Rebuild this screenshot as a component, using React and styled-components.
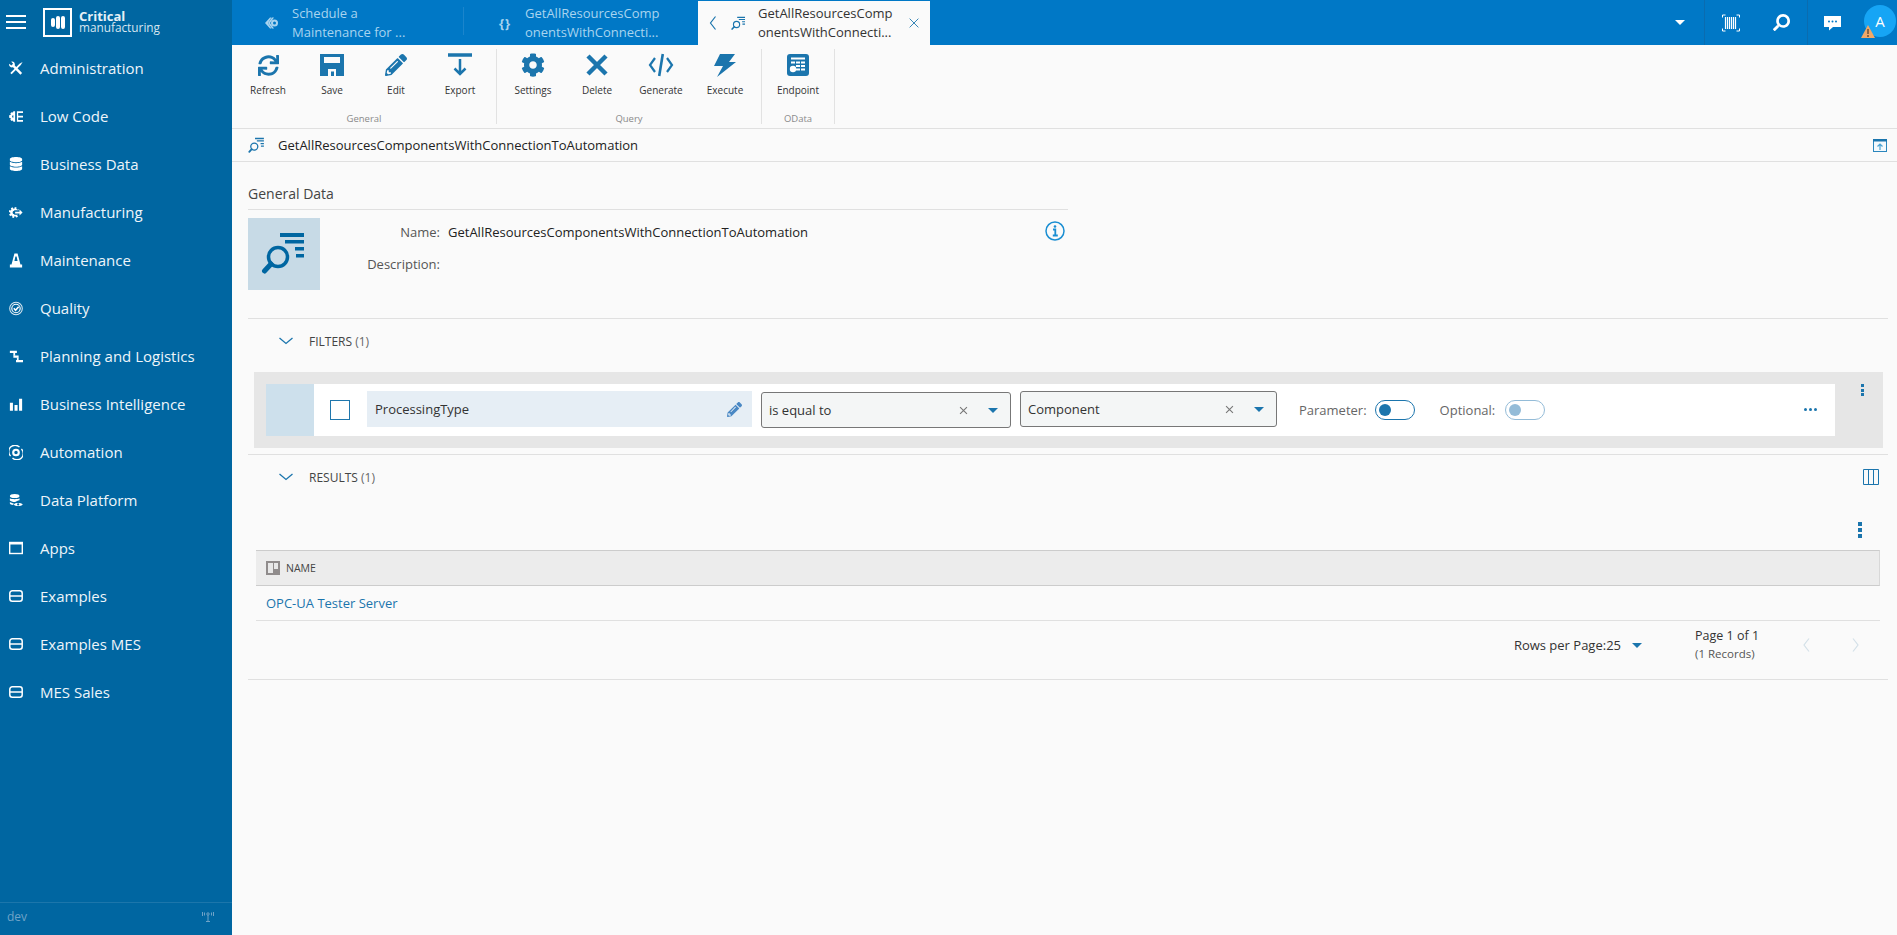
import React from 'react';
import styled, { createGlobalStyle } from 'styled-components';
import { FaSync, FaPencilAlt, FaCog, FaDatabase, FaSearch } from 'react-icons/fa';

const GlobalStyle = createGlobalStyle`
  html, body { margin: 0; padding: 0; height: 100%; overflow: hidden; background: #fafafa; }
  body { font-family: "Open Sans", "Liberation Sans", sans-serif; color: #333; }
  * { box-sizing: border-box; }
`;

const Shell = styled.div`
  display: flex;
  height: 935px;
`;

/* sidebar */
const Sidebar = styled.aside`
  width: 232px;
  flex: none;
  background: #0066a1;
  color: #fff;
  display: flex;
  flex-direction: column;
`;
const Brand = styled.div`
  height: 44px;
  display: flex;
  align-items: center;
  padding-left: 6px;
`;
const Burger = styled.div`
  width: 20px;
  height: 14px;
  border-top: 2px solid #fff;
  border-bottom: 2px solid #fff;
  position: relative;
  &::after {
    content: '';
    position: absolute;
    left: 0;
    right: 0;
    top: 4px;
    height: 2px;
    background: #fff;
  }
`;
const LogoBox = styled.div`
  width: 29px;
  height: 29px;
  margin-left: 17px;
  border: 2px solid #fff;
  display: flex;
  align-items: center;
  justify-content: center;
  gap: 1px;
`;
const LogoBar = styled.span`
  width: 4px;
  height: ${p => p.$h}px;
  background: #fff;
  border-radius: 2px;
`;
const LogoText = styled.div`
  margin-left: 7px;
  display: flex;
  flex-direction: column;
  line-height: 11px;
`;
const LogoBold = styled.span`
  font-weight: 700;
  font-size: 13px;
  color: #e6f0f6;
`;
const LogoLight = styled.span`
  font-weight: 400;
  font-size: 11.8px;
  color: #d6e5f0;
`;
const Nav = styled.nav`
  flex: 1;
`;
const NavItem = styled.div`
  height: 48px;
  display: flex;
  align-items: center;
  padding-left: 9px;
  font-size: 15px;
  color: #eef5fa;
`;
const NavIcon = styled.span`
  width: 14px;
  height: 14px;
  margin-right: 17px;
  display: flex;
  align-items: center;
  justify-content: center;
  flex: none;
`;
const SideFoot = styled.div`
  height: 33px;
  border-top: 1px solid #1c76ab;
  display: flex;
  align-items: center;
  justify-content: space-between;
  padding: 0 17px 6px 7px;
  font-size: 12px;
  color: #6fa3c7;
`;

/* main column */
const Main = styled.main`
  flex: 1;
  min-width: 0;
  display: flex;
  flex-direction: column;
`;
const TopBar = styled.header`
  height: 45px;
  background: #0078c6;
  display: flex;
  flex: none;
`;
const Tab = styled.div`
  width: ${p => p.$w}px;
  margin-top: ${p => (p.$active ? 1 : 0)}px;
  display: flex;
  align-items: center;
  background: ${p => (p.$active ? '#fafafa' : 'transparent')};
  color: ${p => (p.$active ? '#333' : '#a8d4ef')};
  position: relative;
  ${p => p.$sep && `
    &::after {
      content: '';
      position: absolute;
      right: 0;
      top: 7px;
      bottom: 10px;
      width: 1px;
      background: #1b85cc;
    }
  `}
`;
const TabIcon = styled.span`
  width: 16px;
  margin-left: ${p => p.$left}px;
  margin-right: ${p => p.$right}px;
  display: flex;
  justify-content: center;
  flex: none;
`;
const TabBrace = styled.b`
  font-size: 13px;
  letter-spacing: 1px;
`;
const TabText = styled.div`
  width: 137px;
  font-size: 13px;
  line-height: 19px;
  white-space: nowrap;
`;
const TopSpacer = styled.div`
  flex: 1;
  display: flex;
  justify-content: flex-end;
  align-items: center;
`;
const Caret = styled.span`
  width: 0;
  height: 0;
  border-left: ${p => p.$size}px solid transparent;
  border-right: ${p => p.$size}px solid transparent;
  border-top: ${p => p.$size}px solid ${p => p.$color};
  flex: none;
`;
const TabsCaret = styled(Caret)`
  margin-right: 19px;
`;
const MirrorSearch = styled(FaSearch)`
  transform: scaleX(-1);
`;
const TopCell = styled.div`
  width: ${p => p.$w}px;
  height: 45px;
  display: flex;
  align-items: center;
  justify-content: space-around;
  border-left: 1px solid #0a6cb0;
  flex: none;
`;
const Avatar = styled.div`
  width: 32px;
  height: 32px;
  border-radius: 50%;
  margin: 0 1px 3px 7px;
  background: #16a5f5;
  color: #fff;
  display: flex;
  align-items: center;
  justify-content: center;
  font-size: 15px;
  position: relative;
  flex: none;
`;
const AvatarWarn = styled.svg`
  position: absolute;
  left: -3px;
  bottom: -2px;
`;

/* ribbon */
const Ribbon = styled.div`
  height: 84px;
  flex: none;
  display: flex;
  border-bottom: 1px solid #e0e0e0;
  padding-top: 4px;
`;
const RibbonGroup = styled.div`
  padding: 0 4px;
  height: 75px;
  border-right: 1px solid #e2e2e2;
  display: flex;
  flex-direction: column;
  align-items: center;
`;
const RibbonButtons = styled.div`
  display: flex;
  flex: 1;
`;
const ToolButton = styled.div`
  width: 64px;
  display: flex;
  flex-direction: column;
  align-items: center;
  font-size: 10px;
  color: #333;
`;
const ToolIcon = styled.div`
  height: 24px;
  margin-top: 4px;
  margin-bottom: 6px;
  display: flex;
  align-items: center;
  justify-content: center;
  color: #1b75ad;
`;
const GroupLabel = styled.div`
  font-size: 9.5px;
  color: #8a8a8a;
  line-height: 13px;
  margin-bottom: -1px;
`;

const TitleBar = styled.div`
  height: 33px;
  flex: none;
  display: flex;
  align-items: center;
  padding: 0 10px 0 16px;
  border-bottom: 1px solid #e0e0e0;
  font-size: 13px;
  color: #222;
`;
const TitleText = styled.span`
  margin-left: 13px;
  flex: 1;
`;

/* page content */
const Content = styled.div`
  flex: 1;
  padding: 0 9px 0 16px;
`;
const GeneralBlock = styled.section`
  width: 820px;
  padding-top: 17px;
`;
const BlockHead = styled.div`
  height: 31px;
  font-size: 14px;
  color: #444;
  line-height: 30px;
  border-bottom: 1px solid #e0e0e0;
`;
const Details = styled.div`
  display: flex;
  height: 72px;
  margin-top: 8px;
  padding-right: 3px;
`;
const HeroIcon = styled.div`
  width: 72px;
  height: 72px;
  background: #c7dae6;
  display: flex;
  align-items: center;
  justify-content: center;
  flex: none;
`;
const FormGrid = styled.div`
  display: grid;
  grid-template-columns: 120px 1fr;
  grid-auto-rows: 32px;
  column-gap: 8px;
  flex: 1;
  align-items: center;
  font-size: 13px;
  margin-top: -2px;
`;
const FormLabel = styled.div`
  text-align: right;
  color: #555;
`;
const FormValue = styled.div`
  color: #222;
`;
const InfoSlot = styled.div`
  padding-top: 3px;
`;
const Divider = styled.div`
  height: 1px;
  margin-top: ${p => p.$top || 0}px;
  background: #e0e0e0;
`;
const SectionHead = styled.div`
  height: ${p => p.$h}px;
  padding-bottom: ${p => p.$pb || 0}px;
  display: flex;
  align-items: center;
  padding-left: 30px;
  padding-right: 9px;
  font-size: 12px;
  color: #444;
`;
const SectionLabel = styled.span`
  margin-left: 15px;
  flex: 1;
`;
const SectionCount = styled.span`
  color: #666;
`;
const FilterBox = styled.div`
  margin: 6px 5px 6px 6px;
  height: 76px;
  background: #e6e6e6;
  display: flex;
  padding: 12px 0 12px 12px;
`;
const FilterRow = styled.div`
  flex: 1;
  background: #fff;
  display: flex;
  align-items: center;
`;
const FilterStrip = styled.div`
  width: 48px;
  align-self: stretch;
  background: #cde0ec;
  flex: none;
`;
const CheckBox = styled.div`
  width: 20px;
  height: 20px;
  margin-left: 16px;
  border: 1px solid #1f77ad;
  flex: none;
`;
const FieldBox = styled.div`
  width: 385px;
  height: 36px;
  margin: 0 0 2px 17px;
  padding: 0 10px 0 8px;
  background: #e6eef5;
  display: flex;
  align-items: center;
  justify-content: space-between;
  font-size: 13px;
  flex: none;
`;
const SelectBox = styled.div`
  width: ${p => p.$w}px;
  height: 36px;
  margin: 0 0 ${p => p.$lift || 0}px 9px;
  padding: 0 12px 0 7px;
  border: 1px solid #777;
  border-radius: 3px;
  background: #f4f6f6;
  display: flex;
  align-items: center;
  font-size: 13px;
  flex: none;
`;
const SelectText = styled.span`
  flex: 1;
`;
const SelectClear = styled.span`
  margin-right: 19px;
  display: flex;
`;
const ToggleLabel = styled.span`
  font-size: 13px;
  color: #666;
  margin-left: ${p => p.$left}px;
`;
const Toggle = styled.div`
  width: 40px;
  height: 20px;
  margin-left: ${p => (p.$off ? 10 : 8)}px;
  border: 1px solid ${p => (p.$off ? '#94bcd8' : '#1b75ad')};
  border-radius: 10px;
  display: flex;
  align-items: center;
  padding-left: 3px;
  flex: none;
  &::before {
    content: '';
    width: 12px;
    height: 12px;
    border-radius: 50%;
    background: ${p => (p.$off ? '#94bcd8' : '#1b75ad')};
  }
`;
const RowMore = styled.div`
  margin-left: auto;
  margin-right: 18px;
  margin-bottom: 2px;
  display: flex;
  gap: 2px;
`;
const Dot = styled.span`
  width: ${p => p.$s}px;
  height: ${p => p.$s}px;
  background: ${p => p.$c};
  border-radius: ${p => (p.$square ? 0 : '50%')};
`;
const BoxSide = styled.div`
  width: 48px;
  display: flex;
  justify-content: center;
  padding-left: 7px;
  flex: none;
`;
const VDots = styled.div`
  display: flex;
  flex-direction: column;
  gap: ${p => p.$gap}px;
  align-self: flex-start;
`;
const TableTools = styled.div`
  height: 51px;
  display: flex;
  justify-content: flex-end;
  padding: 23px 26px 0 0;
`;
const DataTable = styled.div`
  margin: 0 8px;
`;
const TableHead = styled.div`
  height: 36px;
  background: #ececec;
  border-top: 1px solid #ccc;
  border-bottom: 1px solid #ccc;
  border-right: 1px solid #d8d8d8;
  display: flex;
  align-items: center;
  padding-left: 10px;
  font-size: 10.5px;
  color: #444;
`;
const ColIcon = styled.span`
  width: 14px;
  height: 14px;
  margin-right: 6px;
  background: #908c8c;
  display: flex;
  gap: 1px;
  padding: 2px;
`;
const ColIconPane = styled.span`
  width: 5px;
  height: ${p => p.$h}px;
  background: #e8e8e8;
`;
const TableRow = styled.div`
  height: 35px;
  display: flex;
  align-items: center;
  padding-left: 10px;
  border-bottom: 1px solid #e0e0e0;
  font-size: 13px;
  color: #1b75ad;
`;
const Pager = styled.div`
  height: 58px;
  display: flex;
  align-items: center;
  justify-content: flex-end;
  padding: 0 9px 10px 0;
  font-size: 13px;
  color: #333;
`;
const RowsPerPage = styled.div`
  display: flex;
  align-items: center;
  gap: 11px;
  margin-right: 53px;
`;
const PageInfo = styled.div`
  width: 88px;
  line-height: 18px;
  font-size: 12.5px;
`;
const PageSub = styled.div`
  font-size: 11.5px;
  color: #555;
`;
const PageBtn = styled.div`
  width: 48px;
  display: flex;
  justify-content: center;
`;

/* inline drawings */
const Line = ({ d, size = 16, color = 'currentColor', w = 1.5 }) => (
  <svg width={size} height={size} viewBox="0 0 16 16" fill="none" stroke={color} strokeWidth={w}>
    <path d={d} />
  </svg>
);

const Solid = ({ children }) => (
  <svg width="15" height="15" viewBox="0 0 16 16" fill="#fff">
    {children}
  </svg>
);

const QueryIcon = ({ size, color }) => (
  <svg width={size} height={size} viewBox="14 9 46 46" fill="none">
    <circle cx="31" cy="35" r="9.5" stroke={color} strokeWidth="3.5" />
    <path d="M24 42 17.5 49" stroke={color} strokeWidth="5" strokeLinecap="round" />
    <path d="M33 11h24v4H33zM38 18h19v3.5H38zM48 25h9v3.5h-9zM49 32h8v3.5h-8z" fill={color} />
  </svg>
);

const navIcons = {
  admin: (
    <Solid>
      <path d="M1.500 13 12 2.500 15.500 .5 13.500 4 3 14.500Z" />
      <path d="M5.500 3.500 15 13l-2 2-9.500-9.500Z" />
      <path d="M.3 2.600 2.600 4.700 4.700 2.600 2.600.3C4.800-.5 7 1 6.700 4.200L4.200 6.700C1.200 7-.5 4.800.3 2.600Z" />
    </Solid>
  ),
  lowcode: (
    <svg width="15" height="15" viewBox="0 0 16 16" fill="#fff">
      <path fillRule="evenodd" d="M7 2v12H5l-.5-1.500-1.500.5L1.500 11.500l.7-1.500-2-.5v-3l2-.5-.7-1.500L3 3l1.500.5L5 2ZM5 6.500a1.500 1.500 0 0 0 0 3Z" />
      <path d="M9 2h1.500v12H9zM10.500 2H16v2h-5.500zM10.500 7H16v2h-5.500zM10.500 12H16v2h-5.500z" />
    </svg>
  ),
  data: <FaDatabase size={14} color="#fff" />,
  manufacturing: (
    <svg width="15" height="15" viewBox="0 0 16 16" fill="none" stroke="#fff">
      <circle cx="6" cy="8" r="5" strokeWidth="2.400" strokeDasharray="2 1.900" />
      <circle cx="6" cy="8" r="3.300" strokeWidth="2.800" />
      <path d="M6 5.500h5V3l5 5-5 5v-2.500H6Z" fill="#0066a1" stroke="none" />
      <path d="M7 7h5V4.500L15.500 8 12 11.500V9H7Z" fill="#fff" stroke="none" />
    </svg>
  ),
  maintenance: (
    <Solid>
      <path fillRule="evenodd" d="M6.200 0h3.600l3.300 12.500H15V16H1v-3.500h1.900ZM7.300 3.500 6.200 8.500h3.600L8.700 3.500Z" />
    </Solid>
  ),
  quality: (
    <svg width="15" height="15" viewBox="0 0 16 16" fill="none" stroke="#fff">
      <circle cx="8" cy="8" r="7.200" strokeWidth="1.200" strokeOpacity=".85" />
      <circle cx="8" cy="8" r="4.800" strokeWidth="1.300" />
      <path d="M5.500 7.800 7.500 10 11 6" strokeWidth="1.800" />
    </svg>
  ),
  planning: (
    <Solid>
      <path d="M1 1.500h8v2.500H1zM5 6.800h6v2.500H5zM8 12h8v2.500H8z" />
      <path d="M5 4h2v3H5zM9 9h2v3H9z" />
    </Solid>
  ),
  bi: (
    <Solid>
      <path d="M1 6h3.500v9H1zM6.300 8.500h3.500V15H6.300zM11.500 1.500H15V15h-3.500z" />
    </Solid>
  ),
  automation: (
    <svg width="15" height="15" viewBox="0 0 16 16" fill="none" stroke="#fff">
      <path d="M1.800 12A7.200 7.200 0 0 1 12 1.800M14.200 4A7.200 7.200 0 0 1 4 14.200" strokeWidth="1.500" />
      <circle cx="8" cy="8" r="3.200" strokeWidth="2.400" />
    </svg>
  ),
  platform: (
    <Solid>
      <ellipse cx="6.500" cy="2.800" rx="5.500" ry="2.300" />
      <path d="M1 5.500c1.500 1.400 9.500 1.400 11 0v2.200c-2 .4-3.500 1-5 2.100C4 9.800 2 9 1 8ZM1 9.800c1 .8 2.600 1.300 4.500 1.500L4.800 13C2.800 12.900 1 12.300 1 11.500Z" />
      <path d="M5.500 12.500C7 10.300 13.500 10.300 15.800 12.500 13.500 15 7 15 5.500 12.500Z" />
      <circle cx="10.500" cy="12.500" r="1.300" fill="#0066a1" />
    </Solid>
  ),
  apps: (
    <svg width="14" height="14" viewBox="0 0 14 14" fill="none" stroke="#fff">
      <rect x=".7" y="1.500" width="12.600" height="11" strokeWidth="1.400" />
      <path d="M0 2.500h14" strokeWidth="2" />
    </svg>
  ),
  entity: (
    <svg width="14" height="14" viewBox="0 0 14 14" fill="none" stroke="#fff" strokeWidth="1.500">
      <rect x=".8" y="1.800" width="12.400" height="10.400" rx="2.500" />
      <path d="M1 7h12" />
    </svg>
  ),
};

const navItems = [
  ['admin', 'Administration'],
  ['lowcode', 'Low Code'],
  ['data', 'Business Data'],
  ['manufacturing', 'Manufacturing'],
  ['maintenance', 'Maintenance'],
  ['quality', 'Quality'],
  ['planning', 'Planning and Logistics'],
  ['bi', 'Business Intelligence'],
  ['automation', 'Automation'],
  ['platform', 'Data Platform'],
  ['apps', 'Apps'],
  ['entity', 'Examples'],
  ['entity', 'Examples MES'],
  ['entity', 'MES Sales'],
];

const SaveIcon = () => (
  <svg width="24" height="24" viewBox="0 0 24 24" fill="#1b75ad">
    <path fillRule="evenodd" d="M0 1h24v22H0ZM4 4v6h16V4ZM8 16v7h8v-7ZM11 18.500h3V23h-3Z" />
  </svg>
);
const ExportIcon = () => (
  <svg width="24" height="24" viewBox="0 0 24 24" fill="none" stroke="#1b75ad">
    <path d="M0 2h24" strokeWidth="3.500" />
    <path d="M12 6v15M6.500 15.500 12 21l5.500-5.500" strokeWidth="2.500" />
  </svg>
);
const DeleteIcon = () => (
  <svg width="24" height="24" viewBox="0 0 24 24" fill="none" stroke="#1b75ad" strokeWidth="4.500">
    <path d="M3 3 21 21M21 3 3 21" />
  </svg>
);
const GenerateIcon = () => (
  <svg width="26" height="24" viewBox="0 0 26 24" fill="none" stroke="#1b75ad" strokeWidth="2.200">
    <path d="M7 5 2 12l5 7M19 5l5 7-5 7" />
    <path d="M14.800 1 11.200 23" strokeWidth="2.600" />
  </svg>
);
const ExecuteIcon = () => (
  <svg width="24" height="24" viewBox="0 0 24 24" fill="#1b75ad">
    <path d="M7 1H22L16 9H23L4 24 10 13H1Z" />
  </svg>
);
const EndpointIcon = () => (
  <svg width="22" height="22" viewBox="0 0 22 22">
    <rect width="22" height="22" rx="3" fill="#1b75ad" />
    <path d="M4 3.500h14v2H4zM4 7.500h4v2H4zM9 7.500h4v2H9zM14 7.500h4v2h-4zM9 11h4v2H9zM14 11h4v2h-4zM9 14.500h4v2H9zM14 14.500h4v2h-4z" fill="#fff" />
    <circle cx="6" cy="15" r="3.200" fill="#fff" />
  </svg>
);

const ribbon = [
  {
    label: 'General',
    tools: [
      ['Refresh', <FaSync size={21} key="i" />],
      ['Save', <SaveIcon key="i" />],
      ['Edit', <FaPencilAlt size={22} key="i" />],
      ['Export', <ExportIcon key="i" />],
    ],
  },
  {
    label: 'Query',
    tools: [
      ['Settings', <FaCog size={24} key="i" />],
      ['Delete', <DeleteIcon key="i" />],
      ['Generate', <GenerateIcon key="i" />],
      ['Execute', <ExecuteIcon key="i" />],
    ],
  },
  { label: 'OData', tools: [['Endpoint', <EndpointIcon key="i" />]] },
];

const ScanIcon = () => (
  <svg width="18" height="18" viewBox="0 0 18 18" fill="none" stroke="#fff">
    <path d="M.5 3.500V1h3M14.500 1h3v2.500M.5 14.500V17h3M14.500 17h3v-2.500" />
    <path d="M3.500 3v12M5.500 3v12M7.500 3v12M9.500 3v12M11.500 3v12M13.500 3v12" strokeWidth="1.200" />
  </svg>
);
const ChatIcon = () => (
  <svg width="18" height="18" viewBox="0 0 18 18" fill="#fff">
    <path d="M0 2h17v11H9l-4 3.500V13H0Z" />
    <circle cx="5" cy="7.500" r="1" fill="#0078c6" />
    <circle cx="8.500" cy="7.500" r="1" fill="#0078c6" />
    <circle cx="12" cy="7.500" r="1" fill="#0078c6" />
  </svg>
);
const PanelIcon = () => (
  <svg width="14" height="13" viewBox="0 0 14 13">
    <rect x=".5" y=".5" width="13" height="12" fill="#f4f9fc" stroke="#2a86bd" />
    <rect width="14" height="2.500" fill="#1b75ad" />
    <path d="M7 11V5M4.500 7.500 7 5l2.500 2.500" fill="none" stroke="#4aa3d3" strokeWidth="1.200" />
  </svg>
);
const InfoIcon = () => (
  <svg width="20" height="20" viewBox="0 0 20 20" fill="none" stroke="#1a8ed2">
    <circle cx="10" cy="10" r="9" strokeWidth="1.500" />
    <path d="M8 8.500h2.300V14M7.800 14.500h5" strokeWidth="1.800" />
    <circle cx="10" cy="5.500" r="1.300" fill="#1a8ed2" stroke="none" />
  </svg>
);
const ColumnsIcon = () => (
  <svg width="16" height="16" viewBox="0 0 16 16" fill="none" stroke="#1b75ad">
    <path d="M.5.500h15v15H.5zM5.500.500v15M10.500.500v15" />
  </svg>
);

export default function App() {
  return (
    <>
      <GlobalStyle />
      <Shell>
        <Sidebar>
          <Brand>
            <Burger />
            <LogoBox>
              <LogoBar $h={9} />
              <LogoBar $h={13} />
              <LogoBar $h={13} />
            </LogoBox>
            <LogoText>
              <LogoBold>Critical</LogoBold>
              <LogoLight>manufacturing</LogoLight>
            </LogoText>
          </Brand>
          <Nav>
            {navItems.map(([icon, label]) => (
              <NavItem key={label}>
                <NavIcon>{navIcons[icon]}</NavIcon>
                {label}
              </NavItem>
            ))}
          </Nav>
          <SideFoot>
            dev
            <svg width="14" height="11" viewBox="0 0 14 11" fill="none" stroke="#6fa3c7">
              <path d="M7 4v6M5 10.500h4M1.500 1v4M12.500 1v4M3.500 1.500v3M10.500 1.500v3" />
              <circle cx="7" cy="3" r="1.200" />
            </svg>
          </SideFoot>
        </Sidebar>

        <Main>
          <TopBar>
            <Tab $w={232} $sep>
              <TabIcon $left={32} $right={12}>
                <svg width="14" height="14" viewBox="0 0 14 14" fill="#a8d4ef">
                  <path d="M5 1.500 0 7l5 5.500h1.500L3 7l3.500-5.500Z" />
                  <path d="M7 1.500h2L5 7l4 5.500H7L3 7Z" />
                  <circle cx="9.500" cy="7" r="3.500" />
                  <circle cx="9.500" cy="7" r="1.500" fill="#0078c6" />
                </svg>
              </TabIcon>
              <TabText>Schedule a<br />Maintenance for ...</TabText>
            </Tab>
            <Tab $w={234}>
              <TabIcon $left={33} $right={12}>
                <TabBrace>{'{}'}</TabBrace>
              </TabIcon>
              <TabText>GetAllResourcesComp<br />onentsWithConnecti...</TabText>
            </Tab>
            <Tab $w={232} $active>
              <TabIcon $left={8} $right={8}>
                <Line d="M9.500 1.500 4.500 8l5 6.500" color="#1b75ad" w={1.2} />
              </TabIcon>
              <TabIcon $left={0} $right={12}>
                <QueryIcon size={15} color="#1b75ad" />
              </TabIcon>
              <TabText>GetAllResourcesComp<br />onentsWithConnecti...</TabText>
              <TabIcon $left={11} $right={0}>
                <Line d="M3 3l10 10M13 3 3 13" size={14} color="#1b75ad" w={1} />
              </TabIcon>
            </Tab>
            <TopSpacer>
              <TabsCaret $size={5} $color="#fff" />
              <TopCell $w={103}>
                <ScanIcon />
                <MirrorSearch size={17} color="#fff" />
              </TopCell>
              <TopCell $w={50}>
                <ChatIcon />
              </TopCell>
              <Avatar>
                A
                <AvatarWarn width="14" height="14" viewBox="0 0 14 14">
                  <path d="M7 0 14 13H0Z" fill="#f0a868" />
                  <path d="M7 4v5M7 10v2" stroke="#4a3a2a" strokeWidth="1.200" />
                </AvatarWarn>
              </Avatar>
            </TopSpacer>
          </TopBar>

          <Ribbon>
            {ribbon.map(group => (
              <RibbonGroup key={group.label}>
                <RibbonButtons>
                  {group.tools.map(([label, icon]) => (
                    <ToolButton key={label}>
                      <ToolIcon>{icon}</ToolIcon>
                      {label}
                    </ToolButton>
                  ))}
                </RibbonButtons>
                <GroupLabel>{group.label}</GroupLabel>
              </RibbonGroup>
            ))}
          </Ribbon>

          <TitleBar>
            <QueryIcon size={17} color="#1b75ad" />
            <TitleText>GetAllResourcesComponentsWithConnectionToAutomation</TitleText>
            <PanelIcon />
          </TitleBar>

          <Content>
            <GeneralBlock>
              <BlockHead>General Data</BlockHead>
              <Details>
                <HeroIcon>
                  <QueryIcon size={46} color="#0066a1" />
                </HeroIcon>
                <FormGrid>
                  <FormLabel>Name:</FormLabel>
                  <FormValue>GetAllResourcesComponentsWithConnectionToAutomation</FormValue>
                  <FormLabel>Description:</FormLabel>
                  <FormValue />
                </FormGrid>
                <InfoSlot>
                  <InfoIcon />
                </InfoSlot>
              </Details>
            </GeneralBlock>
            <Divider $top={28} />
            <SectionHead $h={47} $pb={3}>
              <Line d="M1.500 5 8 10.500 14.500 5" color="#1b75ad" w={1.3} />
              <SectionLabel>
                FILTERS <SectionCount>(1)</SectionCount>
              </SectionLabel>
            </SectionHead>
            <FilterBox>
              <FilterRow>
                <FilterStrip />
                <CheckBox />
                <FieldBox>
                  ProcessingType
                  <FaPencilAlt size={15} color="#4a88c4" />
                </FieldBox>
                <SelectBox $w={250}>
                  <SelectText>is equal to</SelectText>
                  <SelectClear>
                    <Line d="M3 3l10 10M13 3 3 13" size={11} color="#777" w={1.6} />
                  </SelectClear>
                  <Caret $size={5} $color="#1b75ad" />
                </SelectBox>
                <SelectBox $w={257} $lift={2}>
                  <SelectText>Component</SelectText>
                  <SelectClear>
                    <Line d="M3 3l10 10M13 3 3 13" size={11} color="#777" w={1.6} />
                  </SelectClear>
                  <Caret $size={5} $color="#1b75ad" />
                </SelectBox>
                <ToggleLabel $left={22}>Parameter:</ToggleLabel>
                <Toggle />
                <ToggleLabel $left={25}>Optional:</ToggleLabel>
                <Toggle $off />
                <RowMore>
                  <Dot $s={3} $c="#1b75ad" />
                  <Dot $s={3} $c="#1b75ad" />
                  <Dot $s={3} $c="#1b75ad" />
                </RowMore>
              </FilterRow>
              <BoxSide>
                <VDots $gap={1.5}>
                  <Dot $s={3} $c="#1b75ad" $square />
                  <Dot $s={3} $c="#1b75ad" $square />
                  <Dot $s={3} $c="#1b75ad" $square />
                </VDots>
              </BoxSide>
            </FilterBox>
            <Divider />
            <SectionHead $h={44}>
              <Line d="M1.500 5 8 10.500 14.500 5" color="#1b75ad" w={1.3} />
              <SectionLabel>
                RESULTS <SectionCount>(1)</SectionCount>
              </SectionLabel>
              <ColumnsIcon />
            </SectionHead>
            <TableTools>
              <VDots $gap={2}>
                <Dot $s={4} $c="#1b75ad" $square />
                <Dot $s={4} $c="#1b75ad" $square />
                <Dot $s={4} $c="#1b75ad" $square />
              </VDots>
            </TableTools>
            <DataTable>
              <TableHead>
                <ColIcon>
                  <ColIconPane $h={10} />
                  <ColIconPane $h={6} />
                </ColIcon>
                NAME
              </TableHead>
              <TableRow>OPC-UA Tester Server</TableRow>
            </DataTable>
            <Pager>
              <RowsPerPage>
                Rows per Page:25
                <Caret $size={5} $color="#1b75ad" />
              </RowsPerPage>
              <PageInfo>
                Page 1 of 1
                <PageSub>(1 Records)</PageSub>
              </PageInfo>
              <PageBtn>
                <Line d="M10 1.500 5 8l5 6.500" color="#d3e0e8" w={1.2} />
              </PageBtn>
              <PageBtn>
                <Line d="M6 1.500 11 8l-5 6.500" color="#d3e0e8" w={1.2} />
              </PageBtn>
            </Pager>
            <Divider />
          </Content>
        </Main>
      </Shell>
    </>
  );
}
